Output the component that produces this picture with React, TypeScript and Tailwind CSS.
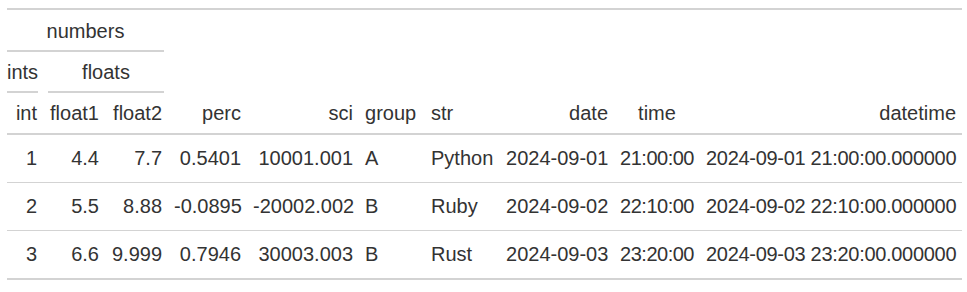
import { FC } from "react";

interface Column {
  key: string;
  label: string;
  width: string;
  align: string;
  cell?: string;
}

const columns: Column[] = [
  { key: "int", label: "int", width: "w-[36px]", align: "text-right" },
  { key: "float1", label: "float1", width: "w-[62px]", align: "text-right" },
  { key: "float2", label: "float2", width: "w-[63px]", align: "text-right" },
  { key: "perc", label: "perc", width: "w-[79px]", align: "text-right" },
  { key: "sci", label: "sci", width: "w-[112px]", align: "text-right" },
  { key: "group", label: "group", width: "w-[66px]", align: "text-left" },
  { key: "str", label: "str", width: "w-[75px]", align: "text-left" },
  { key: "date", label: "date", width: "w-[114px]", align: "text-right" },
  { key: "time", label: "time", width: "w-[86px]", align: "text-center", cell: "tracking-[-0.5px]" },
  { key: "datetime", label: "datetime", width: "w-[262px]", align: "text-right", cell: "tracking-[-0.3px]" },
];

const rows: Record<string, string>[] = [
  {
    int: "1",
    float1: "4.4",
    float2: "7.7",
    perc: "0.5401",
    sci: "10001.001",
    group: "A",
    str: "Python",
    date: "2024-09-01",
    time: "21:00:00",
    datetime: "2024-09-01 21:00:00.000000",
  },
  {
    int: "2",
    float1: "5.5",
    float2: "8.88",
    perc: "-0.0895",
    sci: "-20002.002",
    group: "B",
    str: "Ruby",
    date: "2024-09-02",
    time: "22:10:00",
    datetime: "2024-09-02 22:10:00.000000",
  },
  {
    int: "3",
    float1: "6.6",
    float2: "9.999",
    perc: "0.7946",
    sci: "30003.003",
    group: "B",
    str: "Rust",
    date: "2024-09-03",
    time: "23:20:00",
    datetime: "2024-09-03 23:20:00.000000",
  },
];

const Spanner: FC<{ label: string; className?: string }> = ({ label, className }) => (
  <div className={`border-b-2 border-[#d3d3d3] text-center leading-[27px] ${className ?? ""}`}>
    {label}
  </div>
);

export default function App() {
  return (
    <div className="bg-white pl-[7px] pt-[8px] pb-3">
      <table
        className="w-[955px] table-fixed border-separate border-spacing-0 border-y-2 border-[#d3d3d3] text-[20px] text-[#333333]"
        style={{ fontFamily: '"Liberation Sans", Arial, sans-serif' }}
      >
        <colgroup>
          {columns.map((c) => (
            <col key={c.key} className={c.width} />
          ))}
        </colgroup>
        <thead>
          <tr>
            <th colSpan={3} className="pr-1 pt-[8px] align-bottom font-normal">
              <Spanner label="numbers" className="pb-[5px]" />
            </th>
            <th colSpan={7} />
          </tr>
          <tr>
            <th className="pr-[5px] pt-[7px] align-bottom font-normal">
              <Spanner label="ints" className="pb-[5px]" />
            </th>
            <th colSpan={2} className="pl-[5px] pr-1 pt-[7px] align-bottom font-normal">
              <Spanner label="floats" className="pb-[5px]" />
            </th>
            <th colSpan={7} />
          </tr>
          <tr>
            {columns.map((c) => (
              <th
                key={c.key}
                className={`border-b-2 border-[#d3d3d3] px-1.5 pt-[7px] pb-[6px] align-bottom font-normal leading-[27px] whitespace-nowrap ${c.align}`}
              >
                {c.label}
              </th>
            ))}
          </tr>
        </thead>
        <tbody>
          {rows.map((row, i) => (
            <tr key={row.int}>
              {columns.map((c) => (
                <td
                  key={c.key}
                  className={`px-1.5 py-[10px] leading-[27px] whitespace-nowrap ${c.align} ${c.cell ?? ""} ${
                    i > 0 ? "border-t border-[#d3d3d3]" : ""
                  }`}
                >
                  {row[c.key]}
                </td>
              ))}
            </tr>
          ))}
        </tbody>
      </table>
    </div>
  );
}
